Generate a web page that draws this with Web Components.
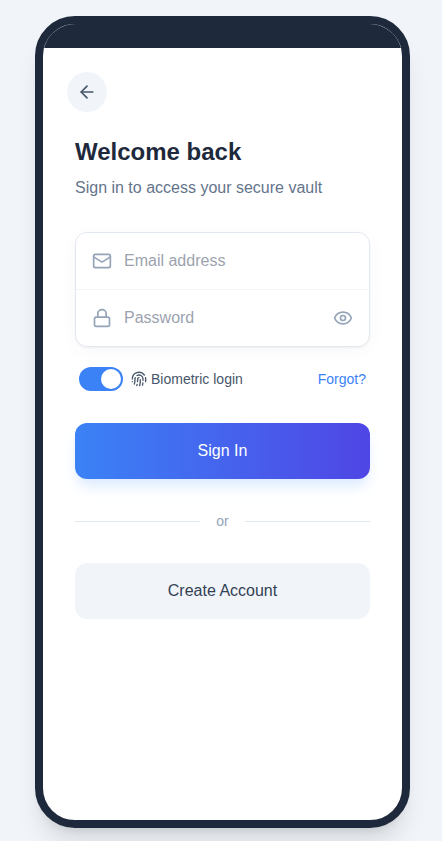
<!DOCTYPE html>
<html lang="en">
<head>
<meta charset="utf-8">
<title>Sign in</title>
<style>
html,body{margin:0;height:100%;overflow:hidden}
body{background:#f1f5f9;font-family:"Liberation Sans",Arial,sans-serif;font-size:16px;line-height:24px;color:#1e293b}
</style>
</head>
<body>
<phone-frame>
  <back-button></back-button>
  <sign-in-form></sign-in-form>
</phone-frame>
<script>
const ICONS = {
  back: '<path d="m12 19-7-7 7-7"/><path d="M19 12H5"/>',
  mail: '<rect width="20" height="16" x="2" y="4" rx="2"/><path d="m22 7-8.97 5.7a1.94 1.94 0 0 1-2.06 0L2 7"/>',
  lock: '<rect width="18" height="11" x="3" y="11" rx="2" ry="2"/><path d="M7 11V7a5 5 0 0 1 10 0v4"/>',
  eye: '<path d="M2.062 12.348a1 1 0 0 1 0-.696 10.75 10.75 0 0 1 19.876 0 1 1 0 0 1 0 .696 10.75 10.75 0 0 1-19.876 0"/><circle cx="12" cy="12" r="3"/>',
  fingerprint: '<path d="M12 10a2 2 0 0 0-2 2c0 1.02-.1 2.51-.26 4"/><path d="M14 13.12c0 2.38 0 6.38-1 8.88"/><path d="M17.29 21.02c.12-.6.43-2.3.5-3.02"/><path d="M2 12a10 10 0 0 1 18-6"/><path d="M2 16h.01"/><path d="M21.8 16c.2-2 .131-5.354 0-6"/><path d="M5 19.5C5.5 18 6 15 6 12a6 6 0 0 1 .34-2"/><path d="M8.65 22c.21-.66.45-1.32.57-2"/><path d="M9 6.8a6 6 0 0 1 9 5.2v2"/>'
};
function define(name, html) {
  customElements.define(name, class extends HTMLElement {
    constructor() {
      super();
      this.attachShadow({mode: 'open'}).innerHTML = html;
    }
  });
}
customElements.define('line-icon', class extends HTMLElement {
  connectedCallback() {
    const s = this.getAttribute('size') || 20;
    const root = this.shadowRoot || this.attachShadow({mode: 'open'});
    root.innerHTML = `<style>:host{display:block;flex:none}svg{display:block}</style>
      <svg width="${s}" height="${s}" viewBox="0 0 24 24" fill="none" stroke="currentColor" stroke-width="2" stroke-linecap="round" stroke-linejoin="round">${ICONS[this.getAttribute('name')]}</svg>`;
  }
});
define('phone-frame', `<style>
  :host{display:block;box-sizing:border-box;width:375px;height:812px;margin:16px 0 0 35px;border:8px solid #1e293b;border-radius:40px;background:#fff;overflow:hidden;box-shadow:0 20px 25px -5px rgba(0,0,0,.1),0 8px 10px -6px rgba(0,0,0,.1)}
  .status{height:24px;background:#1e293b}
  main{padding:24px}
</style><div class="status"></div><main><slot></slot></main>`);
define('back-button', `<style>
  :host{display:block;width:40px;height:40px}
  button{display:flex;align-items:center;justify-content:center;width:40px;height:40px;padding:0;border:0;border-radius:50%;background:#f1f5f9;color:#475569}
</style><button aria-label="Back"><line-icon name="back"></line-icon></button>`);
define('text-field', `<style>
  :host{display:flex;align-items:center;gap:12px;height:56px;padding:0 16px;color:#94a3b8}
  .label{flex:1;color:#9ca3af}
</style><slot name="icon"></slot><span class="label"><slot></slot></span><slot name="action"></slot>`);
define('toggle-switch', `<style>
  :host{display:flex;box-sizing:border-box;justify-content:flex-end;width:44px;height:24px;padding:2px;border-radius:12px;background:#3b82f6}
  i{width:20px;height:20px;border-radius:50%;background:#fff}
</style><i></i>`);
define('action-button', `<style>
  :host{display:block}
  button{display:block;width:100%;height:56px;padding:0;border:0;border-radius:12px;background:#f1f5f9;color:#334155;font:inherit}
  :host([primary]) button{background:linear-gradient(to right,#3b82f6,#4f46e5);color:#fff;box-shadow:0 10px 15px -3px #dbeafe,0 4px 6px -4px #dbeafe}
</style><button><slot></slot></button>`);
define('or-divider', `<style>
  :host{display:flex;align-items:center;gap:16px;height:20px;font-size:14px;line-height:20px;color:#94a3b8}
  i{flex:1;height:1px;background:#e2e8f0}
</style><i></i><slot></slot><i></i>`);
define('sign-in-form', `<style>
  :host{display:block;padding:24px 8px 0}
  h1{margin:0 0 8px;font-size:24px;line-height:32px;font-weight:700}
  p{margin:0 0 32px;color:#64748b}
  .card{border:1px solid #e2e8f0;border-radius:12px;box-shadow:0 4px 20px rgba(0,0,0,.03),0 1px 2px rgba(0,0,0,.05)}
  text-field + text-field{border-top:1px solid #f1f5f9}
  .options{display:flex;align-items:center;gap:8px;height:24px;margin:20px 4px 32px;font-size:14px;line-height:20px}
  .bio{display:flex;align-items:center;gap:4px;flex:1;color:#475569}
  .forgot{color:#3b82f6}
  or-divider{margin:32px 0}
</style>
<h1>Welcome back</h1>
<p>Sign in to access your secure vault</p>
<div class="card">
  <text-field><line-icon slot="icon" name="mail"></line-icon>Email address</text-field>
  <text-field><line-icon slot="icon" name="lock"></line-icon>Password<line-icon slot="action" name="eye"></line-icon></text-field>
</div>
<div class="options">
  <toggle-switch></toggle-switch>
  <span class="bio"><line-icon name="fingerprint" size="16"></line-icon><span>Biometric login</span></span>
  <span class="forgot">Forgot?</span>
</div>
<action-button primary>Sign In</action-button>
<or-divider>or</or-divider>
<action-button>Create Account</action-button>`);
</script>
</body>
</html>
